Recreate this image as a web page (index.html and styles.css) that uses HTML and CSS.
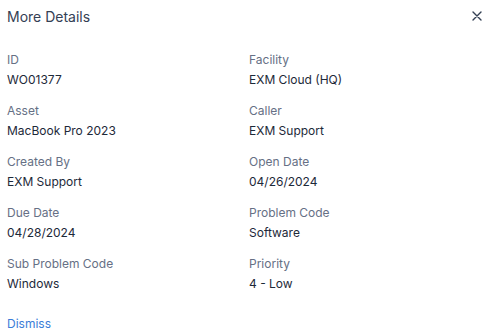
FILE: index.html
```html
<!DOCTYPE html>
<html lang="en">
<head>
    <meta charset="UTF-8">
    <meta name="viewport" content="width=device-width, initial-scale=1.0">
    <title>More Details</title>
    <link rel="stylesheet" href="styles.css">
</head>
<body>
    <div class="panel">
        <div class="panel-header">
            <h1>More Details</h1>
            <button class="close" aria-label="Close">
                <svg width="10" height="10" viewBox="0 0 10 10"><path d="M1 1L9 9M9 1L1 9" stroke="#344054" stroke-width="1.4" stroke-linecap="round"/></svg>
            </button>
        </div>
        <div class="details">
            <div class="field"><div class="label">ID</div><div class="value">WO01377</div></div>
            <div class="field"><div class="label">Facility</div><div class="value">EXM Cloud (HQ)</div></div>
            <div class="field"><div class="label">Asset</div><div class="value">MacBook Pro 2023</div></div>
            <div class="field"><div class="label">Caller</div><div class="value">EXM Support</div></div>
            <div class="field"><div class="label">Created By</div><div class="value">EXM Support</div></div>
            <div class="field"><div class="label">Open Date</div><div class="value">04/26/2024</div></div>
            <div class="field"><div class="label">Due Date</div><div class="value">04/28/2024</div></div>
            <div class="field"><div class="label">Problem Code</div><div class="value">Software</div></div>
            <div class="field"><div class="label">Sub Problem Code</div><div class="value">Windows</div></div>
            <div class="field"><div class="label">Priority</div><div class="value">4 - Low</div></div>
        </div>
        <a class="dismiss" href="#">Dismiss</a>
    </div>
</body>
</html>
```
FILE: styles.css
```css
body {
    margin: 0;
    font-family: Inter, "Noto Sans", sans-serif;
    background: #fff;
}
.panel {
    padding: 0 7px;
}
.panel-header {
    display: flex;
    align-items: center;
    justify-content: space-between;
    height: 32px;
}
h1 {
    margin: 0;
    font-size: 14px;
    font-weight: 400;
    color: #344054;
}
.close {
    background: none;
    border: none;
    padding: 0;
    margin-right: -1px;
    width: 10px;
    height: 10px;
    display: flex;
    cursor: pointer;
}
.details {
    display: grid;
    grid-template-columns: 1fr 1fr;
    column-gap: 10px;
    row-gap: 11px;
    padding-top: 18px;
}
.label {
    font-size: 12px;
    line-height: 20px;
    color: #667085;
}
.value {
    font-size: 12px;
    line-height: 20px;
    color: #1d2939;
}
.dismiss {
    display: block;
    margin-top: 20px;
    font-size: 12px;
    line-height: 20px;
    color: #3b7dd8;
    text-decoration: none;
}
```
